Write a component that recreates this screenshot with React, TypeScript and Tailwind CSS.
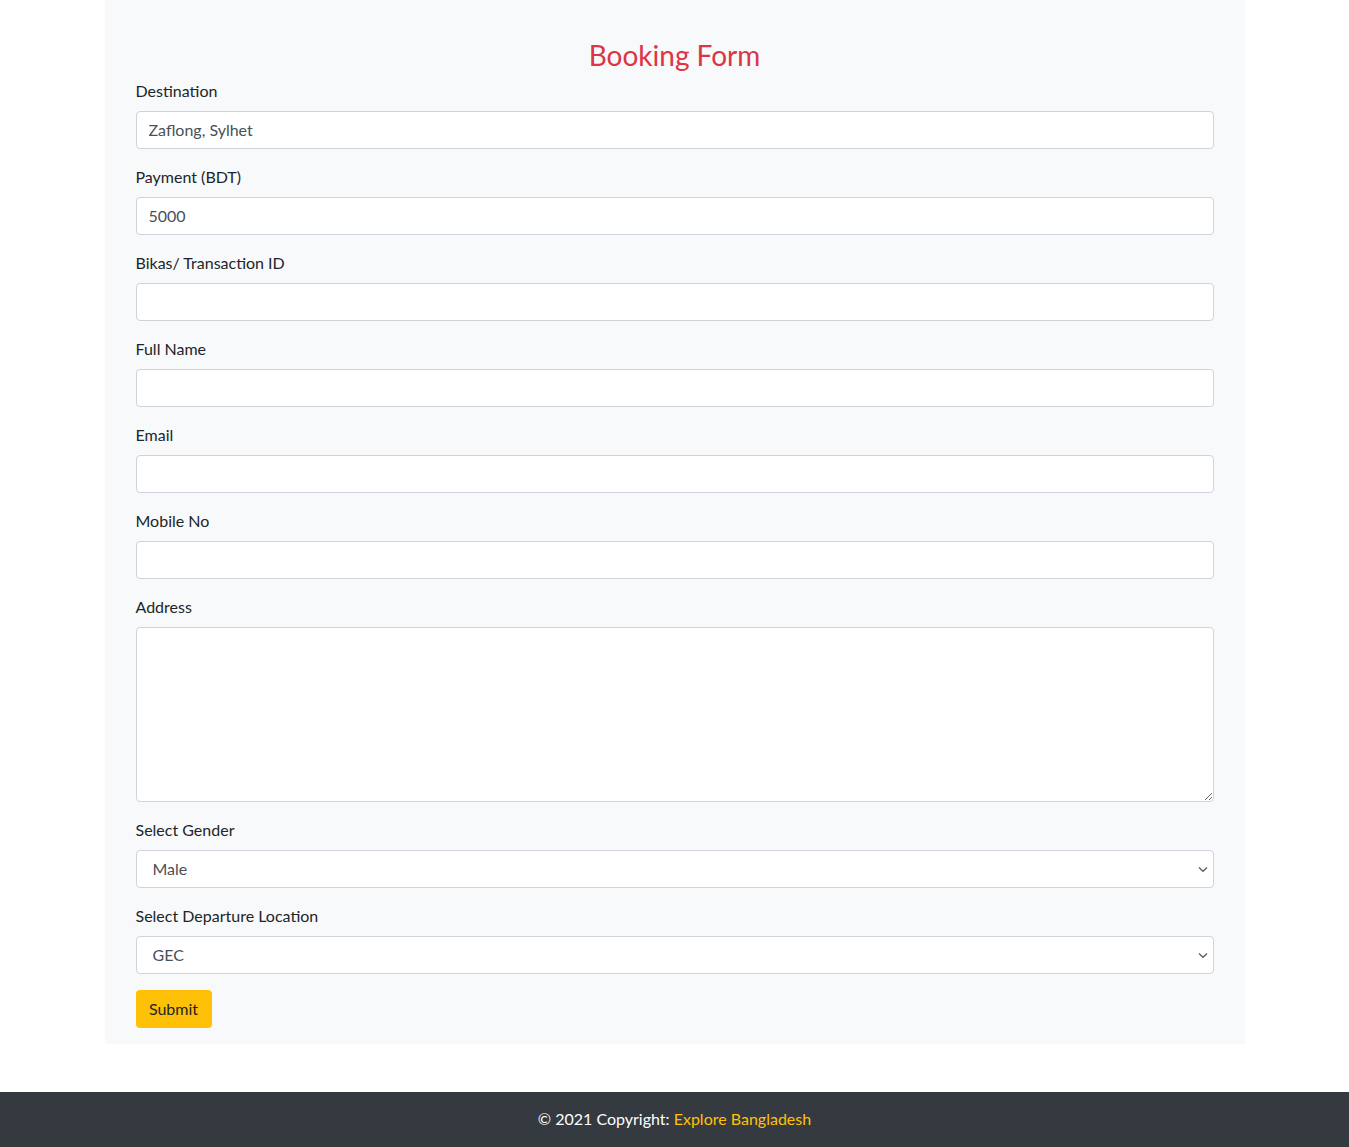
import React from "react";

const font = { fontFamily: 'Lato, "Noto Sans", sans-serif' };

function Field({ label, value = "" }: { label: string; value?: string }) {
  return (
    <div className="mb-4">
      <label className="block mb-2 text-[16px] leading-6 text-[#212529]">{label}</label>
      <input
        defaultValue={value}
        className="block w-full h-[38px] px-3 text-[16px] text-[#495057] bg-white border border-[#ced4da] rounded-[4px] outline-none"
        style={font}
      />
    </div>
  );
}

function Select({ label, value }: { label: string; value: string }) {
  return (
    <div className="mb-4">
      <label className="block mb-2 text-[16px] leading-6 text-[#212529]">{label}</label>
      <div className="relative">
        <select
          className="block w-full h-[38px] pl-4 pr-8 text-[16px] text-[#495057] bg-white border border-[#ced4da] rounded-[4px] appearance-none outline-none"
          style={font}
          defaultValue={value}
        >
          <option>{value}</option>
        </select>
        <svg className="absolute right-[6px] top-[16px] pointer-events-none" width="10" height="7" viewBox="0 0 10 7">
          <path d="M1 1.5 L5 5.2 L9 1.5" fill="none" stroke="#5a6066" strokeWidth="1.4" />
        </svg>
      </div>
    </div>
  );
}

export default function App() {
  return (
    <div className="min-h-screen bg-white flex flex-col" style={font}>
      <div className="w-[1140px] mx-auto bg-[#f8f9fa] px-[31px] pt-[39px] pb-4 mb-12">
        <h3 className="text-center text-[28px] leading-[1.2] mb-[6px] text-[#dc3545]">Booking Form</h3>
        <Field label="Destination" value="Zaflong, Sylhet" />
        <Field label="Payment (BDT)" value="5000" />
        <Field label="Bikas/ Transaction ID" />
        <Field label="Full Name" />
        <Field label="Email" />
        <Field label="Mobile No" />
        <div className="mb-4">
          <label className="block mb-2 text-[16px] leading-6 text-[#212529]">Address</label>
          <textarea
            className="block w-full h-[175px] px-3 py-1.5 text-[16px] text-[#495057] bg-white border border-[#ced4da] rounded-[4px] outline-none"
            style={font}
          />
        </div>
        <Select label="Select Gender" value="Male" />
        <Select label="Select Departure Location" value="GEC" />
        <button className="h-[38px] w-[76px] bg-[#ffc107] text-[#212529] text-[16px] rounded-[4px]" style={font}>
          Submit
        </button>
      </div>
      <footer className="bg-[#343a40] h-[55px] flex items-center justify-center text-[16px] text-white">
        <span>
          © 2021 Copyright: <a className="text-[#ffc107]">Explore Bangladesh</a>
        </span>
      </footer>
    </div>
  );
}
